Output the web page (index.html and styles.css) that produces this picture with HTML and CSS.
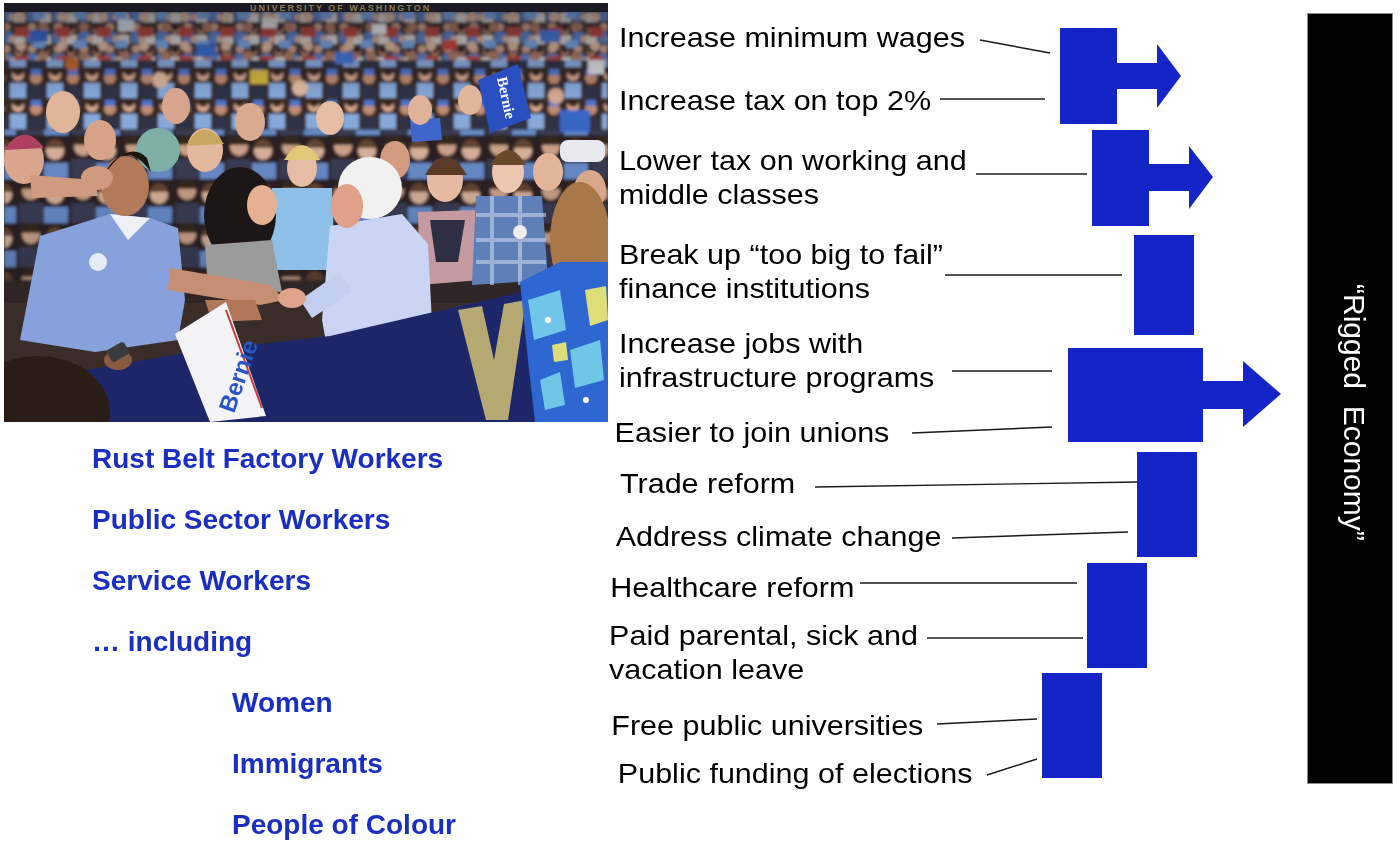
FILE: index.html
```html
<!DOCTYPE html>
<html lang="en">
<head>
<meta charset="utf-8">
<title>Rigged Economy</title>
<link rel="stylesheet" href="styles.css">
</head>
<body>
<div class="slide">
  <div class="left">
    <div class="photo">
      <svg viewBox="4 3 604 419" preserveAspectRatio="none" aria-label="Rally photo">
        <defs>
          <pattern id="crowdA" width="26" height="22" patternUnits="userSpaceOnUse">
            <rect width="26" height="22" fill="#4a3b35"/>
            <circle cx="6" cy="5" r="4" fill="#d9a98e"/>
            <circle cx="19" cy="8" r="4" fill="#c38a70"/>
            <rect x="1" y="10" width="11" height="11" fill="#5d88d2"/>
            <rect x="14" y="13" width="11" height="9" fill="#e6e2dc"/>
            <circle cx="12" cy="17" r="3.5" fill="#e4b89e"/>
            <circle cx="19" cy="6" r="3" fill="#2c1e18"/>
          </pattern>
          <pattern id="crowdA2" width="41" height="29" patternUnits="userSpaceOnUse" patternTransform="translate(13 9)">
            <circle cx="8" cy="8" r="5" fill="#eac2a6"/>
            <circle cx="30" cy="18" r="5" fill="#b57e62"/>
            <rect x="20" y="2" width="12" height="8" fill="#7fb0ee"/>
            <rect x="2" y="18" width="14" height="10" fill="#c04a3a"/>
          </pattern>
          <pattern id="crowdB" width="37" height="31" patternUnits="userSpaceOnUse" patternTransform="translate(9 5)">
            <rect width="37" height="31" fill="#3a2c28"/>
            <circle cx="9" cy="8" r="6" fill="#e1b196"/>
            <circle cx="9" cy="4" r="5" fill="#3a2518"/>
            <circle cx="27" cy="11" r="6" fill="#c99276"/>
            <rect x="1" y="16" width="16" height="15" fill="#8fb4e8"/>
            <rect x="20" y="19" width="16" height="12" fill="#30344a"/>
            <rect x="22" y="2" width="10" height="6" fill="#4f7fd6"/>
          </pattern>
          <pattern id="crowdC" width="52" height="44" patternUnits="userSpaceOnUse" patternTransform="translate(17 3)">
            <rect width="52" height="44" fill="#2f2320"/>
            <circle cx="14" cy="12" r="9" fill="#dcae92"/>
            <path d="M5 10 a9 9 0 0 1 18 0 z" fill="#3b2a1e"/>
            <circle cx="38" cy="16" r="9" fill="#e8c0a6"/>
            <path d="M29 13 a9 9 0 0 1 18 0 z" fill="#6a4a30"/>
            <rect x="2" y="24" width="24" height="20" fill="#3c3f58"/>
            <rect x="27" y="28" width="24" height="16" fill="#6f96d8"/>
          </pattern>
          <linearGradient id="shade" x1="0" y1="0" x2="0" y2="1">
            <stop offset="0" stop-color="#0d0d18" stop-opacity="0.45"/>
            <stop offset="0.35" stop-color="#0d0d18" stop-opacity="0.05"/>
            <stop offset="1" stop-color="#0d0d18" stop-opacity="0.25"/>
          </linearGradient>
          <filter id="soft" x="-5%" y="-5%" width="110%" height="110%">
            <feGaussianBlur stdDeviation="1.6"/>
          </filter>
          <filter id="softer" x="-5%" y="-5%" width="110%" height="110%">
            <feGaussianBlur stdDeviation="0.7"/>
          </filter>
        </defs>
        <rect x="4" y="3" width="604" height="419" fill="#3a2d29"/>
        <g filter="url(#soft)">
          <rect x="4" y="3" width="604" height="80" fill="url(#crowdA)"/>
          <rect x="4" y="3" width="604" height="80" fill="url(#crowdA2)"/>
          <rect x="4" y="60" width="604" height="90" fill="url(#crowdB)"/>
          <rect x="4" y="130" width="604" height="150" fill="url(#crowdC)"/>
          <rect x="30" y="30" width="18" height="12" fill="#3d6fd6"/>
          <rect x="118" y="20" width="16" height="11" fill="#e8eef8"/>
          <rect x="196" y="44" width="20" height="13" fill="#3d6fd6"/>
          <rect x="262" y="18" width="15" height="10" fill="#f2f2f2"/>
          <rect x="335" y="52" width="19" height="12" fill="#4a7ee0"/>
          <rect x="372" y="24" width="14" height="10" fill="#ffffff"/>
          <rect x="540" y="30" width="20" height="12" fill="#4a7ee0"/>
          <rect x="588" y="60" width="16" height="14" fill="#e8e8e8"/>
          <rect x="442" y="40" width="15" height="10" fill="#d44a3a"/>
          <circle cx="72" cy="64" r="7" fill="#c86a30"/>
          <circle cx="160" cy="80" r="8" fill="#e8c0a0"/>
          <circle cx="300" cy="88" r="8" fill="#f0c8aa"/>
          <circle cx="556" cy="96" r="8" fill="#e4b69c"/>
          <rect x="250" y="70" width="18" height="14" fill="#e0c040"/>
          <rect x="560" y="110" width="30" height="22" fill="#3a6cd0"/>
        </g>
        <rect x="4" y="3" width="604" height="300" fill="url(#shade)"/>
        <rect x="4" y="3" width="604" height="9" fill="#1b1a22"/>
        <text x="250" y="11" class="arena">UNIVERSITY OF WASHINGTON</text>

        <g filter="url(#softer)">
        <polygon points="478,80 518,64 531,118 490,133" fill="#2b4fc0"/>
        <text x="0" y="0" class="sign-w" transform="translate(497 78) rotate(78)">Bernie</text>
        <polygon points="410,120 440,118 442,140 412,142" fill="#3f66cc"/>

        <g>
          <ellipse cx="24" cy="160" rx="20" ry="24" fill="#d9a58c"/>
          <path d="M4 150 q20 -30 40 -2 z" fill="#b04060"/>
          <ellipse cx="63" cy="112" rx="17" ry="21" fill="#e2b49a"/>
          <ellipse cx="100" cy="140" rx="16" ry="20" fill="#d8a286"/>
          <ellipse cx="176" cy="106" rx="14" ry="18" fill="#d7a58e"/>
          <ellipse cx="205" cy="150" rx="18" ry="22" fill="#e3b89c"/>
          <path d="M186 146 q18 -32 38 -2 z" fill="#c9a662"/>
          <ellipse cx="158" cy="150" rx="22" ry="22" fill="#7fb0a8"/>
          <ellipse cx="250" cy="122" rx="15" ry="19" fill="#d9aa90"/>
          <ellipse cx="330" cy="118" rx="14" ry="17" fill="#e5bca4"/>
          <ellipse cx="395" cy="160" rx="15" ry="19" fill="#d39c80"/>
          <ellipse cx="420" cy="110" rx="12" ry="15" fill="#dfb299"/>
          <ellipse cx="470" cy="100" rx="12" ry="15" fill="#e0b59a"/>
          <ellipse cx="445" cy="180" rx="18" ry="22" fill="#e6b9a0"/>
          <path d="M425 175 q20 -36 42 0 z" fill="#5b3a26"/>
          <ellipse cx="548" cy="172" rx="15" ry="19" fill="#e2b49a"/>
          <ellipse cx="590" cy="190" rx="16" ry="20" fill="#d9a88c"/>
          <rect x="560" y="140" width="45" height="22" rx="8" fill="#e8e8f0"/>
          <ellipse cx="508" cy="172" rx="16" ry="21" fill="#ecc6ae"/>
          <path d="M490 165 q18 -30 36 0 z" fill="#6b4a2a"/>
        </g>

        <path d="M418 212 L475 210 L480 280 L420 285 Z" fill="#c49aa0"/>
        <path d="M430 220 L465 220 L458 262 L436 262 Z" fill="#2d2e44"/>
        <path d="M476 196 L542 196 L548 280 L472 285 Z" fill="#5f7fb8"/>
        <path d="M476 215 H546 M476 240 H546 M476 262 H546 M492 196 V285 M520 196 V285" stroke="#c8d4ee" stroke-width="4" opacity="0.6"/>
        <circle cx="520" cy="232" r="7" fill="#eeeeee"/>

        <path d="M272 188 L332 188 L335 270 L270 270 Z" fill="#8ec0ea"/>
        <ellipse cx="302" cy="168" rx="15" ry="19" fill="#e6bca2"/>
        <path d="M284 160 q18 -30 36 0 z" fill="#e0c878"/>

        <ellipse cx="240" cy="215" rx="36" ry="48" fill="#1c1412"/>
        <ellipse cx="262" cy="205" rx="15" ry="20" fill="#e4b292"/>
        <path d="M205 245 L272 240 L282 292 L208 290 Z" fill="#9b9b9b"/>

        <path d="M40 236 L110 214 L150 218 L178 228 L185 300 L178 340 L95 352 L20 340 Z" fill="#86a1dc"/>
        <path d="M110 214 L128 240 L150 218 Z" fill="#eef0f6"/>
        <ellipse cx="125" cy="186" rx="24" ry="30" fill="#b27a58"/>
        <path d="M101 180 q22 -46 50 -8 l-4 -14 q-20 -20 -46 22 z" fill="#1a1410"/>
        <ellipse cx="97" cy="178" rx="16" ry="12" fill="#d09a7e"/>
        <circle cx="98" cy="262" r="9" fill="#e8ecf4"/>
        <path d="M170 268 L270 285 L285 300 L260 305 L168 290 Z" fill="#c68e72"/>
        <path d="M30 175 L95 180 L98 196 L32 198 Z" fill="#cf9a80"/>
        <path d="M205 300 L255 300 L262 320 L212 322 Z" fill="#b07858"/>

        <path d="M330 226 L402 214 L428 244 L436 402 L338 408 L322 320 Z" fill="#c9d5f3"/>
        <path d="M300 300 L340 272 L352 292 L312 318 Z" fill="#c2cff0"/>
        <ellipse cx="292" cy="298" rx="14" ry="10" fill="#e0a48a"/>
        <ellipse cx="370" cy="188" rx="32" ry="31" fill="#f1f1f1"/>
        <ellipse cx="347" cy="206" rx="16" ry="22" fill="#e0a08a"/>
        <path d="M342 396 L424 394 L422 422 L344 422 Z" fill="#26262c"/>

        <path d="M75 372 L190 352 L330 336 L520 292 L545 300 L545 422 L75 422 Z" fill="#1f2868"/>
        <path d="M458 310 L482 306 L494 360 L504 304 L526 300 L508 420 L486 420 Z" fill="#b6a872"/>

        <ellipse cx="580" cy="240" rx="30" ry="58" fill="#a97848"/>
        <path d="M520 282 L560 262 L608 262 L608 422 L535 422 L528 360 Z" fill="#2e66d2"/>
        <path d="M528 300 L560 290 L566 330 L534 340 Z M570 350 L600 340 L604 380 L575 388 Z M540 380 L560 372 L565 405 L545 410 Z" fill="#6fc6e6"/>
        <path d="M585 290 L606 286 L608 320 L590 326 Z M552 345 L566 342 L568 360 L554 362 Z" fill="#dede78"/>
        <circle cx="548" cy="320" r="3" fill="#ffffff"/>
        <circle cx="586" cy="400" r="3" fill="#ffffff"/>

        <polygon points="175,334 226,302 266,416 210,422" fill="#f4f4f6"/>
        <path d="M226 310 L262 408" stroke="#c83a3a" stroke-width="2"/>
        <text class="sign-b" transform="translate(234 414) rotate(-71)">Bernie</text>
        <ellipse cx="38" cy="412" rx="72" ry="56" fill="#2b1d19"/>
        <ellipse cx="118" cy="360" rx="14" ry="10" fill="#8a5a40"/>
        <rect x="108" y="345" width="20" height="14" rx="3" fill="#3a3a3e" transform="rotate(-30 118 352)"/>
        </g>
      </svg>
    </div>
    <ul class="groups">
      <li>Rust Belt Factory Workers</li>
      <li>Public Sector Workers</li>
      <li>Service Workers</li>
      <li>… including</li>
      <li class="sub">Women</li>
      <li class="sub">Immigrants</li>
      <li class="sub">People of Colour</li>
    </ul>
  </div>

  <div class="policies">
    <div class="label">Increase minimum wages</div>
    <div class="label">Increase tax on top 2%</div>
    <div class="label">Lower tax on working and<br>middle classes</div>
    <div class="label">Break up “too big to fail”<br>finance institutions</div>
    <div class="label">Increase jobs with<br>infrastructure programs</div>
    <div class="label">Easier to join unions</div>
    <div class="label">Trade reform</div>
    <div class="label">Address climate change</div>
    <div class="label">Healthcare reform</div>
    <div class="label">Paid parental, sick and<br>vacation leave</div>
    <div class="label">Free public universities</div>
    <div class="label">Public funding of elections</div>
  </div>

  <div class="bar-col">
    <div class="bar"><span class="bar-text">“Rigged  Economy”</span></div>
  </div>

  <svg class="connectors" viewBox="0 0 1400 842" aria-hidden="true">
    <g class="lines">
      <line x1="980" y1="40" x2="1050" y2="53"/>
      <line x1="940" y1="99" x2="1045" y2="99"/>
      <line x1="976" y1="174" x2="1087" y2="174"/>
      <line x1="945" y1="275" x2="1122" y2="275"/>
      <line x1="952" y1="371" x2="1052" y2="371"/>
      <line x1="912" y1="433" x2="1052" y2="427"/>
      <line x1="815" y1="487" x2="1138" y2="482"/>
      <line x1="952" y1="538" x2="1128" y2="532"/>
      <line x1="860" y1="583" x2="1077" y2="583"/>
      <line x1="927" y1="638" x2="1083" y2="638"/>
      <line x1="937" y1="724" x2="1037" y2="719"/>
      <line x1="987" y1="775" x2="1037" y2="759"/>
    </g>
    <g class="blocks">
      <path d="M1060 28 H1117 V63 H1157 V44 L1181 76 L1157 108 V89 H1117 V124 H1060 Z"/>
      <path d="M1092 130 H1149 V164 H1189 V146 L1213 177 L1189 209 V191 H1149 V226 H1092 Z"/>
      <rect x="1134" y="235" width="60" height="100"/>
      <path d="M1068 348 H1203 V381 H1243 V361 L1281 394 L1243 427 V409 H1203 V442 H1068 Z"/>
      <rect x="1137" y="452" width="60" height="105"/>
      <rect x="1087" y="563" width="60" height="105"/>
      <rect x="1042" y="673" width="60" height="105"/>
    </g>
  </svg>
</div>
</body>
</html>
```

FILE: styles.css
```css
html, body {
  margin: 0;
  padding: 0;
  background: #ffffff;
}

body {
  width: 1400px;
  height: 842px;
  overflow: hidden;
  font-family: "Liberation Sans", Arial, sans-serif;
}

.slide {
  position: relative;
  display: flex;
  width: 1400px;
  height: 842px;
}

/* left column: photo + audience list */
.left {
  flex: 0 0 608px;
  display: flex;
  flex-direction: column;
}

.photo {
  margin: 3px 0 0 4px;
  width: 604px;
  height: 419px;
}

.photo svg {
  display: block;
  width: 100%;
  height: 100%;
}

.arena {
  font-family: "Liberation Sans", Arial, sans-serif;
  font-size: 9px;
  font-weight: bold;
  fill: #8a7a50;
  letter-spacing: 2px;
}

.sign-w {
  font-family: "Liberation Serif", serif;
  font-size: 15px;
  font-weight: bold;
  fill: #ffffff;
}

.sign-b {
  font-family: "Liberation Sans", Arial, sans-serif;
  font-size: 24px;
  font-weight: bold;
  fill: #2a56c4;
}

.groups {
  list-style: none;
  margin: 5.8px 0 0;
  padding: 0 0 0 92px;
  color: #1a2ec2;
  font-weight: bold;
  font-size: 28px;
  line-height: 61px;
  white-space: nowrap;
}

.groups .sub {
  padding-left: 140px;
}

/* middle column: policy labels */
.policies {
  flex: 0 0 699px;
  display: flex;
  flex-direction: column;
  align-items: flex-start;
  font-size: 28px;
  line-height: 34px;
  color: #000000;
}

.label {
  padding-left: 10px;
  white-space: nowrap;
  transform: scaleX(1.09);
  transform-origin: left center;
}

.label:nth-child(1)  { margin-top: 21.4px; }
.label:nth-child(2)  { margin-top: 29px; }
.label:nth-child(3)  { margin-top: 26px; }
.label:nth-child(4)  { margin-top: 26px; }
.label:nth-child(5)  { margin-top: 20.6px; }
.label:nth-child(6)  { margin-top: 21.4px; padding-left: 6px; }
.label:nth-child(7)  { margin-top: 17px; padding-left: 11px; }
.label:nth-child(8)  { margin-top: 19px; padding-left: 7px; }
.label:nth-child(9)  { margin-top: 16.6px; padding-left: 2px; }
.label:nth-child(10) { margin-top: 14.4px; padding-left: 1px; }
.label:nth-child(11) { margin-top: 22px; padding-left: 3px; }
.label:nth-child(12) { margin-top: 14px; padding-left: 9px; }

/* right column: black bar */
.bar-col {
  flex: 0 0 86px;
  padding-top: 13px;
}

.bar {
  box-sizing: border-box;
  height: 771px;
  background: #000000;
  border: 1px solid #8c8c8c;
  display: flex;
  align-items: center;
  justify-content: center;
  padding-top: 28px;
  padding-left: 8px;
}

.bar-text {
  writing-mode: vertical-rl;
  color: #ffffff;
  font-size: 30px;
  white-space: pre;
}

/* diagram overlay */
.connectors {
  position: absolute;
  left: 0;
  top: 0;
  width: 1400px;
  height: 842px;
  pointer-events: none;
}

.lines line {
  stroke: #1a1a1a;
  stroke-width: 1.4;
}

.blocks path,
.blocks rect {
  fill: #1425c8;
}
```
